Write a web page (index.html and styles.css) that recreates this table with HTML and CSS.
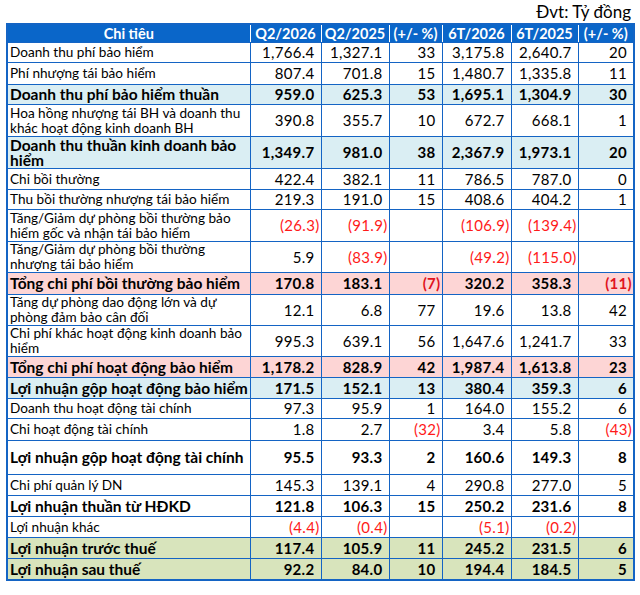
FILE: index.html
```html
<!DOCTYPE html>
<html lang="vi">
<head>
<meta charset="utf-8">
<link rel="stylesheet" href="styles.css">
</head>
<body>
<div class="unit">Đvt: Tỷ đồng</div>
<table class="fin">
<colgroup>
<col class="c-label"><col class="c-q"><col class="c-q2"><col class="c-p"><col class="c-h"><col class="c-h2"><col class="c-p2">
</colgroup>
<thead>
<tr class="head"><th>Chi tiêu</th><th>Q2/2026</th><th>Q2/2025</th><th>(+/- %)</th><th>6T/2026</th><th>6T/2025</th><th>(+/- %)</th></tr>
</thead>
<tbody>
<tr class="r20 dot"><td class="t">Doanh thu phí bảo hiểm</td><td class="n">1,766.4</td><td class="n">1,327.1</td><td class="n">33</td><td class="n">3,175.8</td><td class="n">2,640.7</td><td class="n">20</td></tr>
<tr class="r22"><td class="t">Phí nhượng tái bảo hiểm</td><td class="n">807.4</td><td class="n">701.8</td><td class="n">15</td><td class="n">1,480.7</td><td class="n">1,335.8</td><td class="n">11</td></tr>
<tr class="r20 b blue"><td class="t">Doanh thu phí bảo hiểm thuần</td><td class="n">959.0</td><td class="n">625.3</td><td class="n">53</td><td class="n">1,695.1</td><td class="n">1,304.9</td><td class="n">30</td></tr>
<tr class="r33"><td class="t">Hoa hồng nhượng tái BH và doanh thu khác hoạt động kinh doanh BH</td><td class="n">390.8</td><td class="n">355.7</td><td class="n">10</td><td class="n">672.7</td><td class="n">668.1</td><td class="n">1</td></tr>
<tr class="r32 b blue"><td class="t">Doanh thu thuần kinh doanh bảo hiểm</td><td class="n">1,349.7</td><td class="n">981.0</td><td class="n">38</td><td class="n">2,367.9</td><td class="n">1,973.1</td><td class="n">20</td></tr>
<tr class="r21 dot"><td class="t">Chi bồi thường</td><td class="n">422.4</td><td class="n">382.1</td><td class="n">11</td><td class="n">786.5</td><td class="n">787.0</td><td class="n">0</td></tr>
<tr class="r20 dot"><td class="t">Thu bồi thường nhượng tái bảo hiểm</td><td class="n">219.3</td><td class="n">191.0</td><td class="n">15</td><td class="n">408.6</td><td class="n">404.2</td><td class="n">1</td></tr>
<tr class="r32 dot"><td class="t">Tăng/Giảm dự phòng bồi thường bảo hiểm gốc và nhận tái bảo hiểm</td><td class="n"><span class="neg">(26.3)</span></td><td class="n"><span class="neg">(91.9)</span></td><td class="n"></td><td class="n"><span class="neg">(106.9)</span></td><td class="n"><span class="neg">(139.4)</span></td><td class="n"></td></tr>
<tr class="r30"><td class="t">Tăng/Giảm dự phòng bồi thường nhượng tái bảo hiểm</td><td class="n">5.9</td><td class="n"><span class="neg">(83.9)</span></td><td class="n"></td><td class="n"><span class="neg">(49.2)</span></td><td class="n"><span class="neg">(115.0)</span></td><td class="n"></td></tr>
<tr class="r22 b pink"><td class="t">Tổng chi phí bồi thường bảo hiểm</td><td class="n">170.8</td><td class="n">183.1</td><td class="n"><span class="neg">(7)</span></td><td class="n">320.2</td><td class="n">358.3</td><td class="n"><span class="neg">(11)</span></td></tr>
<tr class="r31 dot"><td class="t">Tăng dự phòng dao động lớn và dự phòng đảm bảo cân đối</td><td class="n">12.1</td><td class="n">6.8</td><td class="n">77</td><td class="n">19.6</td><td class="n">13.8</td><td class="n">42</td></tr>
<tr class="r31"><td class="t">Chi phí khác hoạt động kinh doanh bảo hiểm</td><td class="n">995.3</td><td class="n">639.1</td><td class="n">56</td><td class="n">1,647.6</td><td class="n">1,241.7</td><td class="n">33</td></tr>
<tr class="r21 b pink"><td class="t">Tổng chi phí hoạt động bảo hiểm</td><td class="n">1,178.2</td><td class="n">828.9</td><td class="n">42</td><td class="n">1,987.4</td><td class="n">1,613.8</td><td class="n">23</td></tr>
<tr class="r21 b blue"><td class="t">Lợi nhuận gộp hoạt động bảo hiểm</td><td class="n">171.5</td><td class="n">152.1</td><td class="n">13</td><td class="n">380.4</td><td class="n">359.3</td><td class="n">6</td></tr>
<tr class="r20 dot"><td class="t">Doanh thu hoạt động tài chính</td><td class="n">97.3</td><td class="n">95.9</td><td class="n">1</td><td class="n">164.0</td><td class="n">155.2</td><td class="n">6</td></tr>
<tr class="r22"><td class="t">Chi hoạt động tài chính</td><td class="n">1.8</td><td class="n">2.7</td><td class="n"><span class="neg">(32)</span></td><td class="n">3.4</td><td class="n">5.8</td><td class="n"><span class="neg">(43)</span></td></tr>
<tr class="r35 b"><td class="t">Lợi nhuận gộp hoạt động tài chính</td><td class="n">95.5</td><td class="n">93.3</td><td class="n">2</td><td class="n">160.6</td><td class="n">149.3</td><td class="n">8</td></tr>
<tr class="r21"><td class="t">Chi phí quản lý DN</td><td class="n">145.3</td><td class="n">139.1</td><td class="n">4</td><td class="n">290.8</td><td class="n">277.0</td><td class="n">5</td></tr>
<tr class="r21 b"><td class="t">Lợi nhuận thuần từ HĐKD</td><td class="n">121.8</td><td class="n">106.3</td><td class="n">15</td><td class="n">250.2</td><td class="n">231.6</td><td class="n">8</td></tr>
<tr class="r21"><td class="t">Lợi nhuận khác</td><td class="n"><span class="neg">(4.4)</span></td><td class="n"><span class="neg">(0.4)</span></td><td class="n"></td><td class="n"><span class="neg">(5.1)</span></td><td class="n"><span class="neg">(0.2)</span></td><td class="n"></td></tr>
<tr class="r21 b green"><td class="t">Lợi nhuận trước thuế</td><td class="n">117.4</td><td class="n">105.9</td><td class="n">11</td><td class="n">245.2</td><td class="n">231.5</td><td class="n">6</td></tr>
<tr class="r21 b green"><td class="t">Lợi nhuận sau thuế</td><td class="n">92.2</td><td class="n">84.0</td><td class="n">10</td><td class="n">194.4</td><td class="n">184.5</td><td class="n">5</td></tr>
</tbody>
</table>
</body>
</html>
```
FILE: styles.css
```css
html, body {
  margin: 0;
  padding: 0;
  background: #ffffff;
}
body {
  font-family: "Lato", "Open Sans", "Liberation Sans", sans-serif;
  color: #000000;
}
.unit {
  height: 23px;
  line-height: 24px;
  font-size: 17px;
  text-align: right;
  padding-right: 9px;
  box-sizing: border-box;
}
.fin {
  margin-left: 6px;
  border-collapse: collapse;
  table-layout: fixed;
  width: 627px;
  font-size: 13.6px;
  border: 2px solid #1464c4;
}
.c-label { width: 243px; }
.c-q { width: 71px; }
.c-q2 { width: 68px; }
.c-p { width: 53px; }
.c-h { width: 69px; }
.c-h2 { width: 67px; }
.c-p2 { width: 56px; }

.fin td {
  border: 1px solid #1464c4;
  padding: 0;
  vertical-align: middle;
  line-height: 15px;
  overflow: visible;
  white-space: nowrap;
}
.fin td.t {
  padding-left: 2px;
  white-space: normal;
}
.fin td.n {
  text-align: right;
  padding-right: 6px;
  font-size: 15px;
  letter-spacing: 0.3px;
}
.neg {
  color: #ff1a1a;
  margin-right: -5px;
}
.head th {
  background: #0a66c9;
  color: #ffffff;
  font-weight: bold;
  font-size: 14.5px;
  height: 17px;
  line-height: 17px;
  padding: 0;
  text-align: center;
  border: 1px solid #1464c4;
  border-left-color: #ffffff;
  border-right-color: #ffffff;
}
.head th:first-child { border-left: 2px solid #1464c4; }
.head th:last-child { border-right: 2px solid #1464c4; }
.dot td { border-bottom: 1px dotted #1464c4; }
.b td { font-weight: bold; }
.b td.t { font-size: 15.5px; }
.blue td { background: #daeef3; }
.pink td { background: #fdd5d5; }
.green td { background: #d8e4bc; }
.pink .neg { color: #e0141e; }

.r20 td { height: 19px; }
.r21 td { height: 20px; }
.r22 td { height: 21px; }
.r30 td { height: 28px; }
.r31 td { height: 30px; }
.r32 td { height: 31px; }
.r33 td { height: 31px; }
.r35 td { height: 33px; }
```
